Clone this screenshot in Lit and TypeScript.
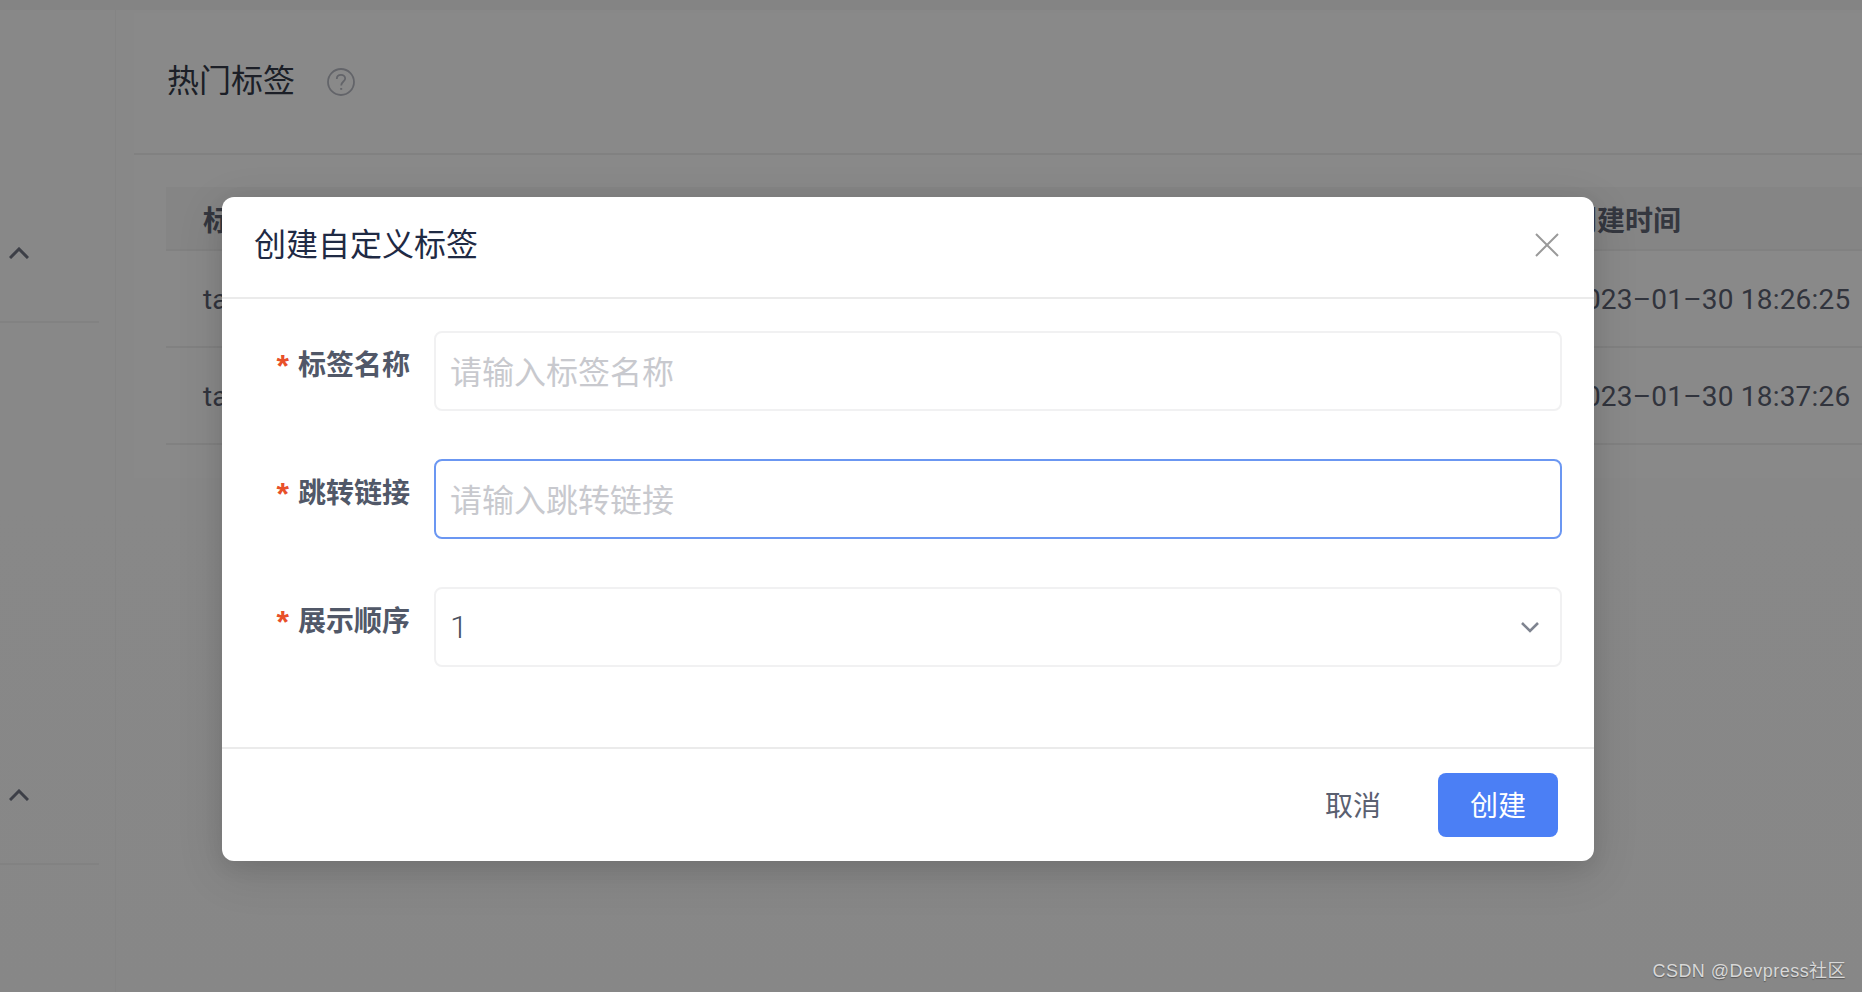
import { LitElement, html, css, svg } from "lit";
import { customElement } from "lit/decorators.js";

const chevronUp = svg`<svg class="chev" width="20" height="12" viewBox="0 0 20 12"><path d="M1 11 L10 2 L19 11" fill="none" stroke="#6f7482" stroke-width="3"/></svg>`;

@customElement("app-root")
export class AppRoot extends LitElement {
  static styles = css`
    :host { display: block; width: 1862px; height: 992px; position: relative; overflow: hidden;
      font-family: Roboto, "Noto Sans CJK SC", sans-serif; background: #f6f6f6; }
    * { box-sizing: border-box; }
    .page { display: flex; height: 992px; background: linear-gradient(#f0f0f0 0, #f0f0f0 10px, #f8f8f8 10px, #f6f6f6 100%); }
    .side { width: 116px; flex: none; padding-top: 168px; border-right: 1px solid #f1f1f1; display: flex; flex-direction: column; gap: 387px; }
    .sec { width: 99px; height: 155px; border-bottom: 2px solid #ededed; padding: 79px 0 0 9px; }
    .chev { display: block; }
    .main { flex: 1; padding: 13px 0 0 18px; min-width: 0; }
    .card { width: 1800px; height: 465px; background: #fafafa; }
    .card-head { height: 142px; border-bottom: 2px solid #ebebeb; display: flex; align-items: center; gap: 32px; padding: 0 0 5px 33px; }
    .card-title { font-size: 32px; color: #333a48; line-height: 44px; }
    .help { display: block; margin-top: 3px; }
    .table { margin: 32px 0 0 32px; font-size: 28px; color: #5a6070; }
    .row { display: grid; grid-template-columns: 1366px 1fr; height: 97px; padding: 2px 0 0 37px; align-items: center; border-bottom: 2px solid #ebebeb; }
    .row.th { height: 64px; background: #f2f2f2; font-weight: 700; color: #5f6574; }
    .date { white-space: nowrap; letter-spacing: .2px; }

    .mask { position: absolute; inset: 0; background: rgba(0,0,0,.45); padding: 197px 0 0 222px; }
    .modal { width: 1372px; height: 664px; background: #fff; border-radius: 12px; display: flex; flex-direction: column;
      box-shadow: 0 12px 48px rgba(0,0,0,.12), 0 6px 20px rgba(0,0,0,.08); }
    .m-head { height: 102px; flex: none; border-bottom: 2px solid #ebebeb; display: flex; align-items: center; justify-content: space-between; padding: 0 34px 0 32px; }
    .m-title { font-size: 32px; line-height: 44px; color: #1f2a44; margin-top: -4px; }
    .close { display: block; margin-top: -4px; }
    .form { flex: 1; display: flex; flex-direction: column; gap: 48px; padding: 32px 32px 0 0; }
    .f-row { display: grid; grid-template-columns: 212px 1fr; column-gap: 0; }
    .label { display: flex; justify-content: flex-end; padding: 15px 24px 0 0; font-size: 28px; line-height: 40px; font-weight: 700; color: #515868; }
    .star { color: #e8502a; margin-right: 9px; font-size: 32px; font-weight: 700; font-family: "Liberation Sans", sans-serif; }
    .input { height: 80px; border: 2px solid #f1f1f2; border-radius: 8px; padding: 0 14px 2px; display: flex; align-items: center; justify-content: space-between; font-size: 32px; color: #c8c9ce; }
    .input.focus { border-color: #6b97f2; }
    .input.val { color: #4a5160; padding: 0 21px 0 14px; font-weight: 300; }
    .foot { height: 114px; flex: none; border-top: 2px solid #ebebeb; display: flex; justify-content: flex-end; align-items: flex-start; gap: 57px; padding: 24px 36px 0 0; }
    .btn { height: 64px; display: flex; align-items: center; justify-content: center; font-size: 28px; border-radius: 8px; padding-bottom: 2px; }
    .cancel { color: #5a6070; }
    .ok { width: 120px; background: #4b7ff5; color: #fff; }
    .wm { position: absolute; right: 16px; bottom: 10px; font-family: "Liberation Sans", "Noto Sans CJK SC", sans-serif; font-size: 18px; letter-spacing: .45px; color: #d8d8d8; text-shadow: 0 1px 1px rgba(0,0,0,.35); }
  `;

  render() {
    return html`
      <div class="page">
        <div class="side">
          <div class="sec">${chevronUp}</div>
          <div class="sec">${chevronUp}</div>
        </div>
        <div class="main">
          <div class="card">
            <div class="card-head">
              <span class="card-title">热门标签</span>
              <svg class="help" width="28" height="28" viewBox="0 0 28 28" fill="none" stroke="#b4b7c0" stroke-width="1.8">
                <circle cx="14" cy="14" r="13"/>
                <path d="M9.8 11 C9.8 8.4 11.6 6.8 14 6.8 C16.4 6.8 18.2 8.4 18.2 10.6 C18.2 13.4 14.2 13.8 14.2 17.4"/>
                <path d="M14.2 20 V21.8" stroke-width="2"/>
              </svg>
            </div>
            <div class="table">
              <div class="row th"><span>标签名称</span><span>创建时间</span></div>
              <div class="row"><span>tag1</span><span class="date">2023–01–30 18:26:25</span></div>
              <div class="row"><span>tag2</span><span class="date">2023–01–30 18:37:26</span></div>
            </div>
          </div>
        </div>
      </div>
      <div class="mask">
        <div class="modal">
          <div class="m-head">
            <span class="m-title">创建自定义标签</span>
            <svg class="close" width="26" height="26" viewBox="0 0 26 26" fill="none" stroke="#9a9a9a" stroke-width="2"><path d="M2 2 L24 24 M24 2 L2 24"/></svg>
          </div>
          <div class="form">
            <div class="f-row"><div class="label"><span class="star">*</span>标签名称</div><div class="input">请输入标签名称</div></div>
            <div class="f-row"><div class="label"><span class="star">*</span>跳转链接</div><div class="input focus">请输入跳转链接</div></div>
            <div class="f-row"><div class="label"><span class="star">*</span>展示顺序</div>
              <div class="input val"><span>1</span>
                <svg width="18" height="12" viewBox="0 0 18 12" fill="none" stroke="#7f8490" stroke-width="2.6"><path d="M1 2 L9 10 L17 2"/></svg>
              </div>
            </div>
          </div>
          <div class="foot">
            <div class="btn cancel">取消</div>
            <div class="btn ok">创建</div>
          </div>
        </div>
      </div>
      <div class="wm">CSDN @Devpress社区</div>
    `;
  }
}
